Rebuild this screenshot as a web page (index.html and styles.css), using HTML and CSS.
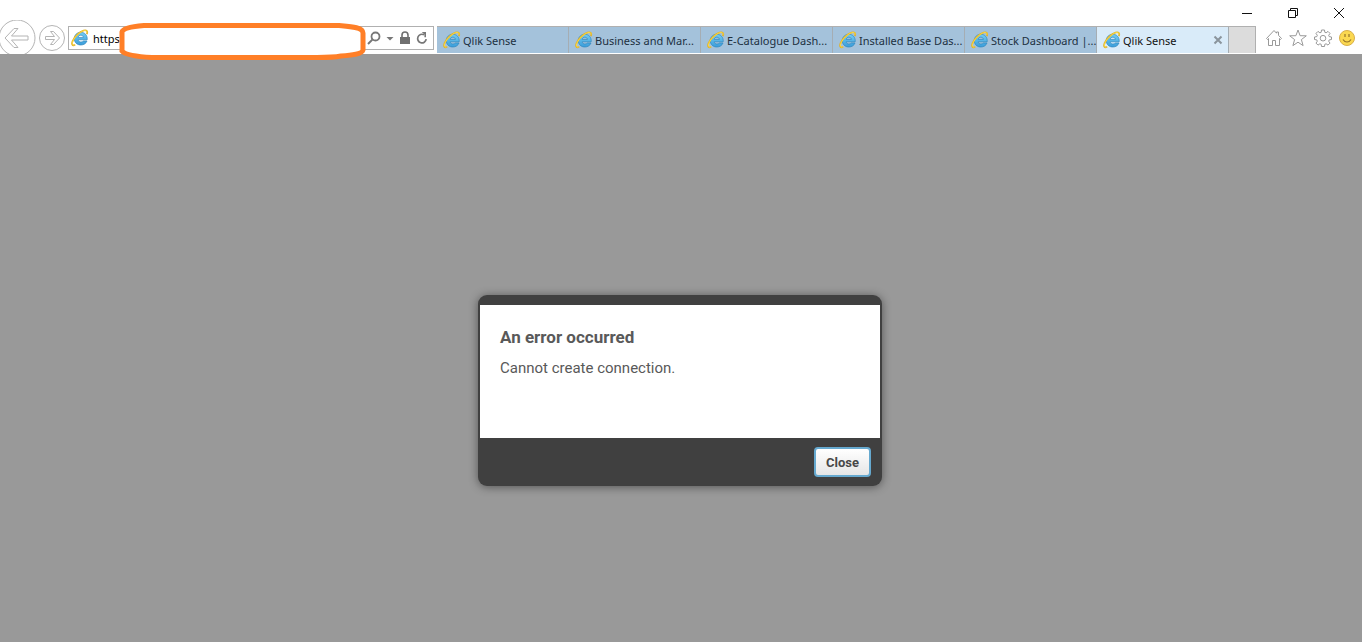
FILE: index.html
```html
<!DOCTYPE html>
<html lang="en">
<head>
<meta charset="utf-8">
<title>Qlik Sense</title>
<link rel="stylesheet" href="styles.css">
</head>
<body>
<svg class="defs" aria-hidden="true">
  <defs>
    <linearGradient id="blue" gradientUnits="userSpaceOnUse" x1="0" y1="3" x2="0" y2="16">
      <stop offset="0" stop-color="#74cdf2"/><stop offset="1" stop-color="#3a9ddb"/>
    </linearGradient>
    <symbol id="ie" viewBox="0 0 18 18">
      <path d="M16.200 10.800H7.200C7.400 12.300 8.400 13 9.800 13C11 13 11.800 12.700 12.300 12H16C15 14.600 12.700 16 9.800 16C6 16 3.300 13.400 3.300 9.700C3.300 6 6 3.300 9.800 3.300C13.800 3.300 16.600 6.200 16.200 10.800zM7.200 8.400H12.400C12.200 7 11.200 6.200 9.800 6.200C8.400 6.200 7.500 7 7.200 8.400z" fill="url(#blue)" fill-rule="evenodd" stroke="#2f86bd" stroke-width=".7"/>
      <path d="M4.200 15.600C1.600 17.400.2 15.600 1.600 12C3.400 7.600 8.600 2.800 12.600 1.500C15.800.6 17 2.400 15.800 5.200" fill="none" stroke="#e0b22a" stroke-width="1.700"/>
      <path d="M3.600 15.800C1.600 16.600.8 15 1.900 12.200C3.700 7.900 8.700 3.100 12.600 1.700C15 1 16.200 1.800 16 3.600" fill="none" stroke="#fbdc4a" stroke-width=".9"/>
    </symbol>
  </defs>
</svg>
<header class="browser">
  <div class="titlebar">
    <button class="window-button" aria-label="Minimize"><svg width="12" height="12" viewBox="0 0 12 12"><path d="M1 6.500h10"/></svg></button>
    <button class="window-button" aria-label="Restore"><svg width="12" height="12" viewBox="0 0 12 12"><path d="M1.500 3.500h7v7h-7zM3.500 3.500v-2h7v7h-2"/></svg></button>
    <button class="window-button" aria-label="Close window"><svg width="12" height="12" viewBox="0 0 12 12"><path d="M1 1l10 10M11 1L1 11"/></svg></button>
  </div>
  <div class="toolbar">
    <nav class="history" aria-label="History">
      <button class="back" aria-label="Back"><svg width="36" height="36" viewBox="0 0 36 36"><circle cx="17" cy="18" r="18"/><path d="M5 18l9-9.500h4l-6.500 7.500H28v4H11.500l6.500 7.500h-4z"/></svg></button>
      <button class="forward" aria-label="Forward"><svg width="26" height="26" viewBox="0 0 26 26"><circle cx="13" cy="13" r="12.500"/><path d="M20.500 13l-6-6.500h-3l4 5h-9v3h9l-4 5h3z"/></svg></button>
    </nav>
    <div class="address">
      <svg class="ie" width="18" height="18"><use href="#ie"/></svg>
      <input class="url" type="text" value="https" aria-label="Address">
      <button class="tool" aria-label="Search"><svg width="14" height="14" viewBox="0 0 14 14"><circle cx="8.500" cy="5.500" r="4" fill="none" stroke="#777" stroke-width="1.800"/><path d="M5.600 8.400L1 13" stroke="#777" stroke-width="2"/></svg></button>
      <button class="tool" aria-label="Search options"><svg width="8" height="14" viewBox="0 0 8 14"><path d="M.5 6h7L4 9.500z" fill="#777"/></svg></button>
      <button class="tool" aria-label="Security"><svg width="12" height="14" viewBox="0 0 12 14"><path d="M1 6h10v7H1z" fill="#707070"/><path d="M3 6V4a3 3 0 0 1 6 0v2" fill="none" stroke="#707070" stroke-width="1.600"/></svg></button>
      <button class="tool" aria-label="Refresh"><svg width="12" height="14" viewBox="0 0 12 14"><path d="M8 3.800A4.300 4.300 0 1 0 10.200 8.200" fill="none" stroke="#777" stroke-width="1.700"/><path d="M5.800 1H10v5.200H8.400V3.600z" fill="#777"/></svg></button>
      <svg class="redaction" viewBox="0 0 247 37" preserveAspectRatio="none" aria-hidden="true"><path d="M25 2.500H220C232 3.500 244 4 244 10V27C243 31 235 32 222 33Q214 34.500 198 34.500H33Q7 33 3 28V9Q4 4 25 2.500z"/></svg>
    </div>
    <nav class="tabs" aria-label="Tabs">
      <a class="tab" href="#"><svg class="ie" width="18" height="18"><use href="#ie"/></svg><span class="label">Qlik Sense</span></a>
      <a class="tab" href="#"><svg class="ie" width="18" height="18"><use href="#ie"/></svg><span class="label">Business and Mar...</span></a>
      <a class="tab" href="#"><svg class="ie" width="18" height="18"><use href="#ie"/></svg><span class="label">E-Catalogue Dash...</span></a>
      <a class="tab" href="#"><svg class="ie" width="18" height="18"><use href="#ie"/></svg><span class="label">Installed Base Das...</span></a>
      <a class="tab" href="#"><svg class="ie" width="18" height="18"><use href="#ie"/></svg><span class="label">Stock Dashboard |...</span></a>
      <div class="tab active"><svg class="ie" width="18" height="18"><use href="#ie"/></svg><a class="label" href="#" aria-current="page">Qlik Sense</a><button class="tab-close" aria-label="Close tab"><svg width="10" height="10" viewBox="0 0 10 10"><path d="M1.500 1.500l7 7M8.500 1.500l-7 7"/></svg></button></div>
      <button class="new-tab" aria-label="New tab"></button>
    </nav>
    <div class="actions">
      <button aria-label="Home"><svg width="18" height="18" viewBox="0 0 18 18"><path d="M1.500 9.500L9 1.500l2.500 2.700V3h2v3.300l3 3.200-1 1-1-1v7h-4v-5h-3v5h-4v-7l-1 1z"/></svg></button>
      <button aria-label="Favorites"><svg width="18" height="18" viewBox="0 0 18 18"><path d="M9 1l2.100 5.700 6.200.1-4.900 3.800 1.700 6L9 13.200l-5.100 3.400 1.700-6L.7 6.800l6.200-.1z"/></svg></button>
      <button aria-label="Tools"><svg width="18" height="18" viewBox="0 0 18 18"><path d="M7.500 1h3l.3 2.300 1.300.5 1.900-1.400 2 2-1.300 1.900.5 1.300 2.300.4v2.500l-2.300.4-.5 1.300 1.300 1.900-2 2-1.900-1.300-1.300.5-.3 2.200h-3l-.3-2.200-1.300-.5L4 16.100l-2-2 1.300-1.900-.5-1.300L.5 10.500V8l2.300-.4.5-1.300L2 4.400l2-2 1.900 1.400 1.300-.5z"/><circle cx="9" cy="9.200" r="2.800"/></svg></button>
      <button aria-label="Feedback"><svg width="18" height="18" viewBox="0 0 18 18"><circle cx="9" cy="9" r="7.500" fill="#fbd850" stroke="#d9b04a"/><path d="M7 5v3M11 5v3M5 10.500q1.500 2.500 4 2.500t4-2.500" fill="none" stroke="#96752a" stroke-width="1.200"/></svg></button>
    </div>
  </div>
</header>
<main class="page">
  <section class="dialog" role="alertdialog" aria-labelledby="dialog-title" aria-describedby="dialog-text">
    <div class="dialog-body">
      <h1 class="dialog-title" id="dialog-title">An error occurred</h1>
      <p class="dialog-text" id="dialog-text">Cannot create connection.</p>
    </div>
    <footer class="dialog-footer"><button class="close">Close</button></footer>
  </section>
</main>
</body>
</html>
```

FILE: styles.css
```css
* { box-sizing: border-box; }

body {
  margin: 0;
  min-height: 100vh;
  display: flex;
  flex-direction: column;
  background: #999;
  font-family: "Noto Sans", "Open Sans", sans-serif;
  font-size: 11px;
}

button {
  padding: 0;
  border: 0;
  background: none;
  font: inherit;
}

svg { display: block; flex: none; }

.defs { position: absolute; width: 0; height: 0; }

.browser { background: #fff; }

.titlebar {
  height: 26px;
  display: flex;
  justify-content: flex-end;
}

.window-button {
  width: 46px;
  display: flex;
  align-items: center;
  justify-content: center;
}

.window-button path { fill: none; stroke: #111; }

.toolbar {
  height: 28px;
  display: flex;
}

.history {
  flex: none;
  width: 68px;
  height: 36px;
  margin-top: -8px;
  padding-top: 3px;
  display: flex;
  align-items: center;
  gap: 3px;
  overflow: hidden;
}

.history svg { fill: #fff; stroke: #b4b4b4; }

.address {
  position: relative;
  flex: 0 1 366px;
  min-width: 200px;
  height: 24px;
  padding: 0 5px 0 2px;
  display: flex;
  align-items: center;
  gap: 4px;
  border: 1px solid #b0b0b0;
}

.url {
  flex: 1;
  min-width: 0;
  padding: 0;
  border: 0;
  outline: 0;
  background: none;
  color: #000;
  font: inherit;
}

.tool + .tool { margin-left: 1px; }

.redaction {
  position: absolute;
  top: -4px;
  left: 50px;
  width: calc(100% - 117px);
  height: 37px;
}

.redaction path {
  fill: #fff;
  stroke: #ff7f27;
  stroke-width: 5px;
}

.tabs {
  flex: 1;
  min-width: 0;
  height: 27px;
  margin-left: 3px;
  display: flex;
  border-top: 1px solid #b0b0b0;
}

.tab {
  flex: 1;
  min-width: 0;
  display: flex;
  align-items: center;
  gap: 2px;
  padding-left: 6px;
  border-right: 1px solid #a5adb3;
  background: #a4c2db;
  color: #20303f;
  text-decoration: none;
  white-space: nowrap;
}

.label {
  flex: 1;
  min-width: 0;
  overflow: hidden;
  color: inherit;
  text-decoration: none;
}

.active { background: #d9ebf9; color: #111; }

.tab-close { margin-right: 5px; }

.tab-close path { stroke: #8a949c; stroke-width: 2px; }

.new-tab {
  flex: none;
  width: 27px;
  border-right: 1px solid #b0b0b0;
  background: #dcdcdc;
}

.actions {
  flex: none;
  width: 106px;
  height: 23px;
  padding: 0 6px 0 9px;
  display: flex;
  align-items: center;
  justify-content: space-between;
}

.actions svg { fill: #fff; stroke: #999; }

.page {
  flex: 1;
  display: flex;
  justify-content: center;
  align-items: flex-start;
  padding: 241px 18px 16px 16px;
}

.dialog {
  width: 404px;
  max-width: 100%;
  padding: 10px 2px 0;
  border-radius: 9px;
  background: #404040;
  box-shadow: 0 1px 10px rgba(0, 0, 0, 0.45);
  color: #595959;
  font-family: Roboto, sans-serif;
}

.dialog-body {
  min-height: 133px;
  padding: 20px;
  background: #fff;
}

.dialog-title {
  margin: 0 0 9px;
  font-size: 17px;
  line-height: 24px;
  font-weight: 700;
}

.dialog-text {
  margin: 0;
  font-size: 15px;
  line-height: 20px;
}

.dialog-footer {
  padding: 9px;
  display: flex;
  justify-content: flex-end;
}

.close {
  width: 57px;
  height: 30px;
  border: 2px solid #66a9cf;
  border-radius: 4px;
  background: linear-gradient(#fff, #e6e6e6);
  color: #484848;
  font-size: 13px;
  font-weight: 700;
}
```
